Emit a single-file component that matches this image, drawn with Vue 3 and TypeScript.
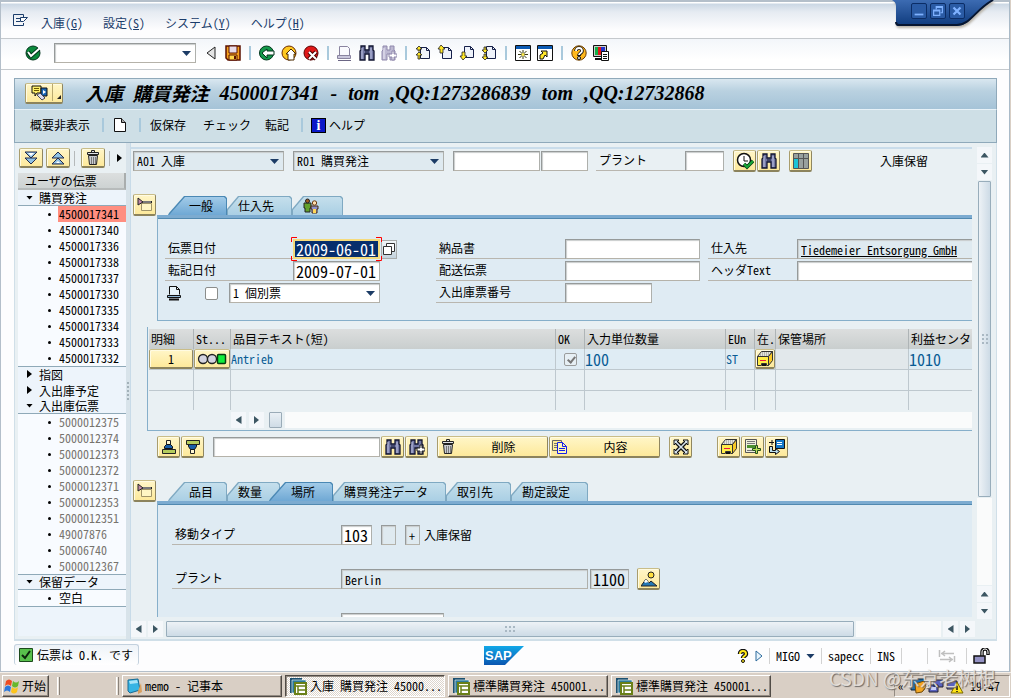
<script setup lang="ts">
import { ref } from 'vue'

interface MenuItem { label: string; key: string }
interface TreeGroup { label: string; open: boolean; muted: boolean; items: string[] }
interface Tab { label: string; icon?: string; w: string }

const menus: MenuItem[] = [
  { label: '入庫', key: 'G' },
  { label: '設定', key: 'S' },
  { label: 'システム', key: 'Y' },
  { label: 'ヘルプ', key: 'H' },
]

const toolGroups: string[][] = [
  ['save'],
  ['back', 'exit', 'cancel'],
  ['print', 'find', 'findnext-dim'],
  ['pg-first', 'pg-up', 'pg-down', 'pg-last'],
  ['newwin', 'shortcut'],
  ['help', 'layout'],
]

const titleParts: string[] = ['4500017341', '-', 'tom', ',QQ:1273286839', 'tom', ',QQ:12732868']

const tree = ref<TreeGroup[]>([
  {
    label: '購買発注', open: true, muted: false,
    items: ['4500017341', '4500017340', '4500017336', '4500017338', '4500017337', '4500017330', '4500017335', '4500017334', '4500017333', '4500017332'],
  },
  { label: '指図', open: false, muted: false, items: [] },
  { label: '入出庫予定', open: false, muted: false, items: [] },
  {
    label: '入出庫伝票', open: true, muted: true,
    items: ['5000012375', '5000012374', '5000012373', '5000012372', '5000012371', '5000012353', '5000012351', '49007876', '50006740', '5000012367'],
  },
  { label: '保留データ', open: true, muted: false, items: ['空白'] },
])
const selectedDoc = ref('4500017341')

const headTabs: Tab[] = [
  { label: '一般', w: 'w58' },
  { label: '仕入先', w: 'w66' },
  { label: '', icon: 'people', w: 'w50' },
]
const headTab = ref(0)
const itemTabs: Tab[] = [
  { label: '品目', w: 'w58' },
  { label: '数量', w: 'w54' },
  { label: '場所', w: 'w54' },
  { label: '購買発注データ', w: 'w112' },
  { label: '取引先', w: 'w66' },
  { label: '勘定設定', w: 'w76' },
]
const itemTab = ref(2)

const postingDate = ref('2009-06-01')
const docDate = ref('2009-07-01')
const tasks: string[] = ['入庫 購買発注 45000...', '標準購買発注 450001...', '標準購買発注 450001...']
</script>

<template>
  <div class="screen">
    <svg class="sprite" aria-hidden="true">
      <symbol id="menu" viewBox="0 0 16 14"><path d="M10.500 3V.5h-10v11h10V9M3 4.500h4M3 7.500h4" fill="none" stroke="#1b3d6b" /><path d="M7.500 3.500h7l-4 4h-3z" fill="#fff" stroke="#1b3d6b" /></symbol>
      <symbol id="ok" viewBox="0 0 16 16"><circle cx="8" cy="8" r="7" fill="#0a8a3c" stroke="#02351c" /><path d="M3 7l3 4 8-7" fill="none" stroke="#02351c" stroke-width="4" /><path d="M3 7l3 4 9-8" fill="none" stroke="#fff" stroke-width="2" /></symbol>
      <symbol id="save" viewBox="0 0 16 16"><path d="M1 1h14v14H3l-2-2z" fill="#f5a01c" stroke="#5a1000" stroke-width="1.500" /><path d="M4 1h8v7H4z" fill="#e8dcea" stroke="#5a1000" /><path d="M4 10h8v5H4z" fill="#ffd84a" stroke="#5a1000" /><path d="M9 11h2v3H9z" fill="#5a1000" /></symbol>
      <symbol id="back" viewBox="0 0 16 16"><circle cx="7.500" cy="8" r="7" fill="#14984a" stroke="#02351c" /><path d="M3 8l5-4v2h7v4H8v3z" fill="#fff" stroke="#02351c" /></symbol>
      <symbol id="exit" viewBox="0 0 16 16"><circle cx="8" cy="8" r="7" fill="#ffc820" stroke="#6a2a00" /><path d="M10 4l5 5h-2v6H7V9H5z" fill="#fff" stroke="#4a2a00" /></symbol>
      <symbol id="cancel" viewBox="0 0 16 16"><circle cx="8" cy="8" r="7" fill="#e01818" stroke="#5a0000" /><path d="M6 7l7 7M13 7l-7 7" stroke="#4a0000" stroke-width="4" /><path d="M6 7l7 7M13 7l-7 7" stroke="#fff" stroke-width="2" /></symbol>
      <symbol id="print" viewBox="0 0 16 16"><path d="M2.500 10V1.500h8l2 2V10" fill="#fafafe" stroke="#8a84a0" /><path d="M.5 10.500h13v3H.5z" fill="#c9c6dc" stroke="#8a84a0" /><path d="M1 15.500h13" stroke="#6b6684" /></symbol>
      <symbol id="print2" viewBox="0 0 16 16"><path d="M2.500 9.500v-8h7l3 3v5" fill="#e8f4fa" stroke="#111" /><path d="M9.500 1.500v3h3" fill="none" stroke="#111" /><path d="M.5 10.500h13v2H.5z" fill="#8fb8d8" stroke="#111" /><path d="M2 14.500h10" stroke="#111" stroke-width="2" /></symbol>
      <symbol id="find" viewBox="0 0 16 16"><path d="M1 15V6l1-1V1h4v4h4V1h4v4l1 1v9h-5V9H6v6z" fill="#7378a4" stroke="#111430" stroke-width="1.300" /><path d="M3 3v11M12 3v11" stroke="#c2c6e4" /><path d="M6 7h4" stroke="#111430" /></symbol>
      <symbol id="findnext" viewBox="0 0 16 16"><path d="M1 15V6l1-1V1h4v4h3V1h4v4l1 1v9h-5V9H6v6z" fill="#7378a4" stroke="#111430" stroke-width="1.300" /><path d="M3 3v11" stroke="#c2c6e4" /><path d="M11 6h2v3h3v3h-3v3h-2v-3H8V9h3z" fill="#fff" stroke="#222" /></symbol>
      <symbol id="findnext-dim" viewBox="0 0 16 16"><path d="M1 15V6l1-1V1h4v4h3V1h4v4l1 1v9h-5V9H6v6z" fill="#bdb9d2" stroke="#8f88ac" /><path d="M3 3v11" stroke="#eceaf6" /><path d="M11 6h2v3h3v3h-3v3h-2v-3H8V9h3z" fill="#fff" stroke="#8f88ac" /></symbol>
      <symbol id="pg-first" viewBox="0 0 16 16"><path d="M5.500 2.500h6l3 3v8h-9z" fill="#eef2fa" stroke="#16204a" /><path d="M11.500 2.500v3h3" fill="none" stroke="#16204a" /><path d="M4 1l3 3H5v2H3V4H1zM4 7l3 3H5v4H3v-4H1z" fill="#ffe628" stroke="#222" stroke-width=".8" /></symbol>
      <symbol id="pg-up" viewBox="0 0 16 16"><path d="M5.500 2.500h6l3 3v8h-9z" fill="#eef2fa" stroke="#16204a" /><path d="M11.500 2.500v3h3" fill="none" stroke="#16204a" /><path d="M4 0l4 4H6v4H3V4H1z" fill="#ffe628" stroke="#222" stroke-width=".8" /></symbol>
      <symbol id="pg-down" viewBox="0 0 16 16"><path d="M5.500 1.500h6l3 3v8h-9z" fill="#eef2fa" stroke="#16204a" /><path d="M11.500 1.500v3h3" fill="none" stroke="#16204a" /><path d="M4 15l4-4H6V7H3v4H1z" fill="#ffe628" stroke="#222" stroke-width=".8" /></symbol>
      <symbol id="pg-last" viewBox="0 0 16 16"><path d="M5.500 1.500h6l3 3v9h-9z" fill="#eef2fa" stroke="#16204a" /><path d="M11.500 1.500v3h3" fill="none" stroke="#16204a" /><path d="M4 8l3-3H5V2H3v3H1zM4 15l3-3H5V9H3v3H1z" fill="#ffe628" stroke="#222" stroke-width=".8" /></symbol>
      <symbol id="newwin" viewBox="0 0 16 16"><path d="M.5.5h15v15H.5z" fill="#fff" stroke="#111" /><path d="M1 1h14v3H1z" fill="#0a5ab4" /><path d="M8 5v9M3 9.500h10M4.500 6l7 7M11.500 6l-7 7" stroke="#3a3a10" /><circle cx="8" cy="9.500" r="1.500" fill="#ffec50" /></symbol>
      <symbol id="shortcut" viewBox="0 0 16 16"><path d="M.5.5h15v15H.5z" fill="#fff" stroke="#111" /><path d="M1 1h14v3H1z" fill="#0a5ab4" /><path d="M3 14v-4l3-2-2-2h6v6l-2-2-2 4z" fill="#ffe628" stroke="#111" /></symbol>
      <symbol id="help" viewBox="0 0 16 16"><circle cx="8" cy="8" r="7.200" fill="#ffb81c" stroke="#6a3c00" /><path d="M5 6c0-4 6-4 6 0 0 2-3 2-3 5" fill="none" stroke="#111" stroke-width="3.600" /><path d="M5 6c0-4 6-4 6 0 0 2-3 2-3 4" fill="none" stroke="#fff" stroke-width="1.800" /><circle cx="8" cy="13" r="1.500" fill="#fff" stroke="#111" /></symbol>
      <symbol id="layout" viewBox="0 0 16 16"><path d="M.5.5h13v11H.5z" fill="#ccc" stroke="#111" /><path d="M2 2h3v8H2z" fill="#12b048" /><path d="M5 2h3v8H5z" fill="#e01818" /><path d="M8 2h4v8H8z" fill="#2232cc" /><path d="M2 14h7" stroke="#111" stroke-width="2" /><path d="M8.500 6.500h7v9h-7z" fill="#fff" stroke="#111" /><path d="M10 9.500h4M10 11.500h4M10 13.500h4" stroke="#111" /></symbol>
      <symbol id="services" viewBox="0 0 18 16"><path d="M1 1h9v7H6l-2 3V8H1z" fill="#fff06a" stroke="#111" /><path d="M3 3.500h5M3 5.500h5" stroke="#6a5a00" /><path d="M10 3h6v8h-6z" fill="#1a66b4" stroke="#111" /><path d="M12 5l3 2-3 2z" fill="#fff" /><path d="M6 10l3-2 5 5-3 2z" fill="#dcdcf0" stroke="#445" /></symbol>
      <symbol id="page" viewBox="0 0 14 16"><path d="M1.500 1.500h7l4 4v9h-11z" fill="#fff" stroke="#111" /><path d="M8.500 1.500v4h4" fill="#aaa" stroke="#111" /></symbol>
      <symbol id="expand" viewBox="0 0 16 16"><path d="M2 2h12L8 8zM2 8h12l-6 6z" fill="#8fc2e6" stroke="#222a4a" /><path d="M5 3h6L8 6z" fill="#fff" /></symbol>
      <symbol id="collapse" viewBox="0 0 16 16"><path d="M2 8h12L8 2zM2 14h12L8 8z" fill="#8fc2e6" stroke="#222a4a" /><path d="M6 13h4l-2-2z" fill="#fff" /></symbol>
      <symbol id="trash" viewBox="0 0 16 16"><path d="M3.500 5.500h9l-1 9h-7z" fill="#c9ccd2" stroke="#222" /><path d="M2.500 2.500h11v2h-11zM6.500 2.500v-2h3v2" fill="#dfe2e6" stroke="#222" /><path d="M6.500 7v7M8.500 7v7M10.500 7v7" stroke="#777" /></symbol>
      <symbol id="exec" viewBox="0 0 18 18"><circle cx="8" cy="8" r="6.500" fill="#fff" stroke="#111" stroke-width="1.500" /><path d="M8 4v5h4" fill="none" stroke="#111" /><path d="M8 12l3 3 6-6" fill="none" stroke="#053c14" stroke-width="3.500" /><path d="M8 12l3 3 6-6" fill="none" stroke="#18a838" stroke-width="2" /></symbol>
      <symbol id="grid" viewBox="0 0 16 16"><path d="M.5.5h15v15H.5z" fill="#98a09e" stroke="#555" /><path d="M1 5h4v10H1zM5 1h1v4H5z" fill="#1cc4d8" /><path d="M1 5.500h14M5.500 1v14M10.500 1v14" stroke="#555" /></symbol>
      <symbol id="people" viewBox="0 0 16 16"><path d="M1 5h7v5H7v4H2v-4H1z" fill="#62a02c" stroke="#222" /><circle cx="4.500" cy="3" r="2" fill="#a05a20" stroke="#222" /><path d="M8 8h7v3h-1v4H9v-4H8z" fill="#8d90c8" stroke="#4a2a10" /><path d="M10 11h3v4h-3z" fill="#ffd858" /><circle cx="11.500" cy="5" r="2.200" fill="#ffe0b0" stroke="#6a3a10" /></symbol>
      <symbol id="detail" viewBox="0 0 16 16"><path d="M4.500 6.500h10v7h-10z" fill="#fff6c4" stroke="#a09468" /><path d="M3 5h12" stroke="#222" stroke-width="2" /><path d="M5 5h9" stroke="#fff" stroke-width=".8" /><path d="M1 1l5 4-5 3z" fill="#c08aa8" stroke="#222" /></symbol>
      <symbol id="stack-up" viewBox="0 0 16 16"><path d="M5.500 1.500h4v4h-4z" fill="#fff7d0" stroke="#222" /><path d="M3.500 9.500v-2l2-2h4l2 2v2z" fill="#1a5ea8" stroke="#111" /><path d="M1.500 10.500h13v4h-13z" fill="#b4cc5c" stroke="#222" /></symbol>
      <symbol id="stack-down" viewBox="0 0 16 16"><path d="M5.500 10.500h4v4h-4z" fill="#fff7d0" stroke="#222" /><path d="M3.500 5.500v2l2 3h4l2-3v-2z" fill="#1a5ea8" stroke="#111" /><path d="M1.500 1.500h13v4h-13z" fill="#b4cc5c" stroke="#222" /></symbol>
      <symbol id="copy" viewBox="0 0 16 16"><path d="M.5 1.500h9v10h-9z" fill="#ffee98" stroke="#666" /><path d="M2 4.500h3M2 6.500h3M2 8.500h3" stroke="#777" /><path d="M5.500 3.500h5l4 4v7h-9z" fill="#fff7b8" stroke="#1420e8" /><path d="M10.500 3.500v4h4" fill="none" stroke="#1420e8" /><path d="M7 9.500h6M7 11.500h6" stroke="#1420e8" /></symbol>
      <symbol id="spread" viewBox="0 0 16 16"><path d="M3 3l10 10M13 3L3 13" stroke="#111" stroke-width="4" /><path d="M1 6V1h5zM10 1h5v5zM15 10v5h-5zM6 15H1v-5z" fill="#d8e4ee" stroke="#111" /><path d="M3 3l10 10M13 3L3 13" stroke="#d8e4ee" stroke-width="1.500" /></symbol>
      <symbol id="stock" viewBox="0 0 16 16"><path d="M.5 5.500l4-5h11l-4 5z" fill="#e4e4dc" stroke="#333" /><path d="M3 4h9M5 2h9" stroke="#888" stroke-dasharray="1 1" /><path d="M11.500 5.500l4-5v9l-4 5z" fill="#f8c828" stroke="#333" /><path d="M.5 5.500h11v9h-2v-2h-5v2h-4z" fill="#ffec48" stroke="#333" /><path d="M5 13h4v2H5z" fill="#111" /><path d="M3 9.500h6" stroke="#e81840" /></symbol>
      <symbol id="addrow" viewBox="0 0 16 16"><path d="M.5.5h11v13H.5z" fill="#eef0dc" stroke="#555" /><path d="M2 2.500h8M2 4.500h8M2 11.500h5" stroke="#777" /><path d="M2 6h8v3H2z" fill="#4a9030" /><path d="M10.500 6.500h2v3h3v2h-3v3h-2v-3h-3v-2h3z" fill="#b8e058" stroke="#24501c" /></symbol>
      <symbol id="move" viewBox="0 0 16 16"><path d="M6.500.5h9v9h-9z" fill="#1478c8" stroke="#111" /><path d="M8 3.500h5M8 5.500h5" stroke="#fff" /><path d="M3 1v5M0 3.500h5" stroke="#111" /><path d="M.5 7.500h3v4h3v-2l4 3-4 3v-2h-6z" fill="#b8dcec" stroke="#111" /></symbol>
      <symbol id="scene" viewBox="0 0 16 16"><circle cx="10" cy="4" r="3" fill="#ffe040" stroke="#222" /><path d="M0 15l5-7 3 4 2-2 6 5z" fill="#2478b4" stroke="#222" /><path d="M3 11l2-3 3 4-2-1-1 1z" fill="#fff" /></symbol>
      <symbol id="win" viewBox="0 0 18 18"><path d="M1 1h12v4H5v11H1z" fill="#1c5070" /><path d="M3 3h14v3H6v10H3z" fill="#2c7a9a" stroke="#fff" stroke-width=".6" /><path d="M6 6h11v11H6z" fill="#fff" stroke="#6a8018" stroke-width="2" /><path d="M6 9h11M9 9v8M9 13h8" stroke="#6a8018" stroke-width="1.500" /></symbol>
      <symbol id="note" viewBox="0 0 16 16"><path d="M2 2l10-1 2 11-10 3-2-2z" fill="#36b4e4" stroke="#186a94" /><path d="M3 3l8-1 1 3-8 1z" fill="#a8e4f8" /><path d="M12 13l3-8 1 9-4 2z" fill="#d8a060" /></symbol>
      <symbol id="flag" viewBox="0 0 16 16"><path d="M2 3c2-2 4-2 6 0L7 8C5 6 3 6 1 8z" fill="#ee4c22" /><path d="M9 3c2 2 4 2 6 0l-1 5c-2 2-4 2-6 0z" fill="#68b82c" /><path d="M1 9c2-2 4-2 6 0l-1 5c-2-2-4-2-6 0z" fill="#2c78dc" /><path d="M8 9c2 2 4 2 6 0l-1 5c-2 2-4 2-6 0z" fill="#fcc41c" /></symbol>
      <symbol id="question" viewBox="0 0 12 14"><path d="M3 5c0-4 6-4 6 0 0 2-3 2-3 4" fill="none" stroke="#111" stroke-width="4.500" /><circle cx="6" cy="12" r="1.500" fill="#ffe818" stroke="#111" /><path d="M3 5c0-4 6-4 6 0 0 2-3 2-3 4" fill="none" stroke="#ffe818" stroke-width="2" /></symbol>
      <symbol id="lock" viewBox="0 0 18 16"><path d="M9 8V4c0-4 6-4 6 0v3" fill="none" stroke="#111" stroke-width="3.500" /><path d="M9 8V4c0-4 6-4 6 0v2" fill="none" stroke="#fff" /><path d="M1 8h11v7H1z" fill="#9492c4" stroke="#111" stroke-width="1.500" /></symbol>
      <symbol id="swap" viewBox="0 0 18 14"><path d="M1.500 1v7M3 4.500h13M7 2L4 4.500 7 7M16.500 7v6M2 10.500h13M11 8l3 2.500-3 2.500" fill="none" stroke="#bfbfbf" stroke-width="1.500" /></symbol>
    </svg>

    <main class="sapwin">
      <div class="winctl">
        <svg class="wc-bg" viewBox="0 0 108 28" aria-hidden="true">
          <defs><linearGradient id="wc" x1="0" y1="0" x2="0" y2="1"><stop offset="0" stop-color="#3c6bb2" /><stop offset="1" stop-color="#0e3a7c" /></linearGradient></defs>
          <path d="M0 0q4 2 4 6v18q0 2 3 2h58c13 0 18-16 37-26z" fill="url(#wc)" />
          <path d="M4 22q0 3 3 3h58c13 0 18-15 36-25" fill="none" stroke="#071631" stroke-width="2" />
        </svg>
        <div class="wc-btns">
          <button type="button" aria-label="最小化"><svg viewBox="0 0 16 16"><path d="M3 12h10" stroke="#7fb2ff" stroke-width="2" /></svg></button>
          <button type="button" aria-label="元に戻す"><svg viewBox="0 0 16 16"><path d="M3 7h7v6H3zM6 6V3h7v7h-2M3 8h7M6 4h7" fill="none" stroke="#7fb2ff" stroke-width="1.400" /></svg></button>
          <button type="button" aria-label="閉じる"><svg viewBox="0 0 16 16"><path d="M4 4l8 8M12 4l-8 8" stroke="#7fb2ff" stroke-width="2.600" /></svg></button>
        </div>
      </div>

      <nav class="menubar">
        <button type="button" class="plain menuicon" aria-label="メニュー"><svg class="m"><use href="#menu" /></svg></button>
        <button v-for="m in menus" :key="m.key" type="button" class="plain">{{ m.label }}(<u>{{ m.key }}</u>)</button>
      </nav>

      <div class="stdbar">
        <button type="button" class="plain okbtn" aria-label="Enter"><svg class="ic"><use href="#ok" /></svg></button>
        <span class="combo cmd"><input type="text" class="field" aria-label="コマンド"></span>
        <button type="button" class="plain tri" aria-label="戻る"><svg viewBox="0 0 10 16"><path d="M9 2v12L1 8z" fill="#e4e4e4" stroke="#222" /></svg></button>
        <template v-for="(g, gi) in toolGroups" :key="gi">
          <i v-if="gi" class="sep" />
          <button v-for="n in g" :key="n" type="button" class="plain" :aria-label="n"><svg class="ic"><use :href="'#' + n" /></svg></button>
        </template>
      </div>

      <section class="frame">
        <header class="titlebar">
          <button type="button" class="yb service" aria-label="サービス"><svg><use href="#services" /></svg><i /><b /></button>
          <h1><span>入庫 購買発注</span><span v-for="(p, i) in titleParts" :key="i" class="lat">{{ p }}</span></h1>
        </header>
        <div class="appbar">
          <button type="button" class="plain">概要非表示</button><i class="sep" />
          <button type="button" class="plain" aria-label="新規"><svg class="pg"><use href="#page" /></svg></button><i class="sep" />
          <button type="button" class="plain">仮保存</button>
          <button type="button" class="plain check">チェック</button>
          <button type="button" class="plain">転記</button><i class="sep" />
          <button type="button" class="plain info"><b>i</b>ヘルプ</button>
        </div>

        <div class="body">
          <aside class="side">
            <div class="sidebar">
              <button type="button" class="yb" aria-label="展開"><svg class="ic"><use href="#expand" /></svg></button>
              <button type="button" class="yb" aria-label="縮小"><svg class="ic"><use href="#collapse" /></svg></button>
              <i class="gsep" />
              <button type="button" class="yb" aria-label="削除"><svg class="ic"><use href="#trash" /></svg></button>
              <i class="gsep" />
              <span class="arr right" />
            </div>
            <h2>ユーザの伝票</h2>
            <ul class="tree">
              <li v-for="g in tree" :key="g.label" :class="{ lined: g.open }">
                <button type="button" class="plain node" @click="g.open = !g.open"><span class="arr" :class="g.open ? 'down' : 'right'" />{{ g.label }}</button>
                <ul v-if="g.open" class="leaves">
                  <li v-for="d in g.items" :key="d">
                    <button type="button" class="plain leaf" :class="{ muted: g.muted, sel: d === selectedDoc }" @click="selectedDoc = d"><i /><span>{{ d }}</span></button>
                  </li>
                </ul>
              </li>
            </ul>
          </aside>
          <div class="splitter"><i v-for="n in 5" :key="n" /></div>

          <div class="work">
            <div class="upper">
              <div class="content">
                <div class="selrow">
                  <span class="combo"><select class="field ro w151" aria-label="処理"><option>A01 入庫</option></select></span>
                  <span class="combo"><select class="field ro w151" aria-label="参照伝票"><option>R01 購買発注</option></select></span>
                  <span class="pair"><input type="text" class="field w87" aria-label="伝票番号"><input type="text" class="field w47" aria-label="明細番号"></span>
                  <span class="pair nogap"><label for="plant0" class="lab w89">プラント</label><input id="plant0" type="text" class="field w39"></span>
                  <span class="pair">
                    <button type="button" class="yb sq" aria-label="実行"><svg class="big"><use href="#exec" /></svg></button>
                    <button type="button" class="yb sq" aria-label="検索"><svg class="ic"><use href="#find" /></svg></button>
                  </span>
                  <button type="button" class="yb sq" aria-label="レイアウト"><svg class="ic"><use href="#grid" /></svg></button>
                  <span class="mvt">入庫保留</span>
                </div>

                <section class="block first">
                  <button type="button" class="yb sq" aria-label="ヘッダ"><svg class="ic"><use href="#detail" /></svg></button>
                  <div class="tabbed">
                    <div class="tabs" role="tablist">
                      <button v-for="(t, i) in headTabs" :key="i" type="button" role="tab" class="tab" :class="[t.w, { on: headTab === i }]" @click="headTab = i"><svg v-if="t.icon" class="ic"><use :href="'#' + t.icon" /></svg><span>{{ t.label }}</span></button>
                    </div>
                    <div class="panel head">
                      <label for="d1" class="lab">伝票日付</label>
                      <div class="cell"><span class="focus"><input id="d1" v-model="postingDate" type="text" class="field w87 big16"><svg viewBox="0 0 91 24" aria-hidden="true"><path d="M.5 5V.5H6M85 .5h5.500V5M90.500 19v4.500H85M6 23.500H.5V19" fill="none" stroke="#f00" /></svg></span><button type="button" class="f4" aria-label="入力候補"><svg viewBox="0 0 14 14"><path d="M4.500 4.500v-3h8v8h-3" fill="#fff" stroke="#333" /><path d="M1.500 4.500h8v8h-8z" fill="#fff" stroke="#333" /></svg></button></div>
                      <label for="n1" class="lab">納品書</label>
                      <div class="cell"><input id="n1" type="text" class="field w135"></div>
                      <label for="v1" class="lab">仕入先</label>
                      <input id="v1" type="text" class="field ro under" readonly value="Tiedemeier Entsorgung GmbH">

                      <label for="d2" class="lab">転記日付</label>
                      <div class="cell"><input id="d2" v-model="docDate" type="text" class="field w87 big16"></div>
                      <label for="n2" class="lab">配送伝票</label>
                      <div class="cell"><input id="n2" type="text" class="field w135"></div>
                      <label for="v2" class="lab">ヘッダText</label>
                      <input id="v2" type="text" class="field">

                      <div class="slip"><svg class="ic"><use href="#print2" /></svg><input type="checkbox" class="cb" aria-label="印刷"><span class="combo"><select class="field w151" aria-label="票種別"><option>1 個別票</option></select></span></div>
                      <label for="n3" class="lab">入出庫票番号</label>
                      <div class="cell"><input id="n3" type="text" class="field w87"></div>
                    </div>
                  </div>
                </section>

                <div class="gridbox">
                  <table>
                    <colgroup><col class="c1"><col class="c2"><col class="c3"><col class="c4"><col class="c5"><col class="c6"><col class="c7"><col class="c8"><col></colgroup>
                    <thead><tr><th>明細</th><th>St...</th><th>品目テキスト（短）</th><th>OK</th><th>入力単位数量</th><th>EUn</th><th>在.</th><th>保管場所</th><th>利益センタ</th></tr></thead>
                    <tbody>
                      <tr class="data">
                        <td><button type="button" class="yb fill">1</button></td>
                        <td><button type="button" class="yb fill" aria-label="状態"><svg class="lights" viewBox="0 0 30 12"><circle cx="6" cy="6" r="4.500" fill="#d4d4e0" stroke="#222" stroke-width="1.300" /><circle cx="15" cy="6" r="4.500" fill="#d4d4e0" stroke="#222" stroke-width="1.300" /><rect x="20.500" y="1.500" width="8" height="9" rx="1" fill="#10ee3c" stroke="#063c10" stroke-width="1.500" /></svg></button></td>
                        <td>Antrieb</td>
                        <td class="mid"><input type="checkbox" class="cb dim" checked disabled aria-label="OK"></td>
                        <td class="big16">100</td><td>ST</td>
                        <td><button type="button" class="yb fill" aria-label="在庫"><svg class="ic"><use href="#stock" /></svg></button></td>
                        <td class="ro" /><td class="big16">1010</td>
                      </tr>
                      <tr v-for="r in 2" :key="r"><td v-for="c in 9" :key="c" /></tr>
                    </tbody>
                  </table>
                  <div class="gscroll"><span class="sb"><b class="arr left" /></span><span class="sb"><b class="arr right" /></span><span class="thumb" /><span class="track" /></div>
                </div>

                <div class="gtools">
                  <span class="pair">
                    <button type="button" class="yb sq" aria-label="前へ"><svg class="ic"><use href="#stack-up" /></svg></button>
                    <button type="button" class="yb sq" aria-label="次へ"><svg class="ic"><use href="#stack-down" /></svg></button>
                  </span>
                  <span class="pair">
                    <input type="text" class="field w167" aria-label="検索語">
                    <button type="button" class="yb sq" aria-label="検索"><svg class="ic"><use href="#find" /></svg></button>
                    <button type="button" class="yb sq" aria-label="次を検索"><svg class="ic"><use href="#findnext" /></svg></button>
                  </span>
                  <span class="pair">
                    <button type="button" class="yb wide"><svg class="ic"><use href="#trash" /></svg><span>削除</span></button>
                    <button type="button" class="yb wide"><svg class="ic"><use href="#copy" /></svg><span>内容</span></button>
                  </span>
                  <button type="button" class="yb sq" aria-label="分配"><svg class="ic"><use href="#spread" /></svg></button>
                  <span class="pair last">
                    <button type="button" class="yb sq" aria-label="在庫"><svg class="ic"><use href="#stock" /></svg></button>
                    <button type="button" class="yb sq" aria-label="行追加"><svg class="ic"><use href="#addrow" /></svg></button>
                    <button type="button" class="yb sq" aria-label="移動"><svg class="ic"><use href="#move" /></svg></button>
                  </span>
                </div>

                <section class="block second">
                  <button type="button" class="yb sq" aria-label="明細詳細"><svg class="ic"><use href="#detail" /></svg></button>
                  <div class="tabbed">
                    <div class="tabs" role="tablist">
                      <button v-for="(t, i) in itemTabs" :key="i" type="button" role="tab" class="tab" :class="[t.w, { on: itemTab === i }]" @click="itemTab = i"><span>{{ t.label }}</span></button>
                    </div>
                    <div class="panel item">
                      <div class="irow"><label for="mt" class="lab w169">移動タイプ</label><input id="mt" type="text" class="field big16 w31" value="103"><input type="text" class="field ro w15" readonly aria-label="特殊在庫"><input type="text" class="field ro w15" readonly value="+" aria-label="符号"><span class="txt">入庫保留</span></div>
                      <div class="irow plant"><label for="pl" class="lab w169">プラント</label><input id="pl" type="text" class="field ro w247" readonly value="Berlin"><input type="text" class="field ro big16 w39" readonly value="1100" aria-label="プラントコード"><button type="button" class="yb sq" aria-label="住所"><svg class="ic"><use href="#scene" /></svg></button></div>
                      <div class="irow"><span class="w169" /><input type="text" class="field w103" aria-label="保管場所"></div>
                    </div>
                  </div>
                </section>
              </div>
              <div class="vscroll"><span class="sb"><b class="arr up" /></span><span class="sb"><b class="arr down" /></span><span class="vthumb"><i v-for="n in 6" :key="n" /></span><span class="track" /><span class="sb"><b class="arr up" /></span><span class="sb"><b class="arr down" /></span></div>
            </div>
            <div class="hscroll"><span class="sb"><b class="arr left" /></span><span class="sb"><b class="arr right" /></span><span class="hthumb"><i v-for="n in 6" :key="n" /></span><span class="track" /><span class="sb"><b class="arr left" /></span><span class="sb"><b class="arr right" /></span></div>
          </div>
        </div>
      </section>

      <footer class="status">
        <div class="msg"><svg viewBox="0 0 14 14"><path d="M.5.5h13v13H.5z" fill="#58c04c" stroke="#1c4a1c" /><path d="M3 7l3 3 5-7" fill="none" stroke="#0c240c" stroke-width="2" /></svg>伝票は O.K. です</div>
        <svg class="sap" viewBox="0 0 40 20" role="img" aria-label="SAP"><defs><linearGradient id="sapg" x1="0" y1="0" x2="0" y2="1"><stop offset="0" stop-color="#12a8e8" /><stop offset="1" stop-color="#0a56b0" /></linearGradient></defs><path d="M0 0h40L21 19H0z" fill="url(#sapg)" /><text x="1" y="14" font-family="Liberation Sans" font-weight="700" font-size="13" fill="#fff">SAP</text></svg>
        <div class="sys">
          <svg class="q"><use href="#question" /></svg>
          <svg class="pl" viewBox="0 0 8 12"><path d="M1 1l6 5-6 5z" fill="#e8f4fc" stroke="#2c6a9c" /></svg>
          <i class="gsep" /><span>MIGO</span><b class="arr down blue" /><i class="gsep" /><span>sapecc</span><i class="gsep" /><span>INS</span><i class="gsep" /><span class="blank" /><i class="gsep" />
          <svg class="swap"><use href="#swap" /></svg><i class="gsep" /><svg class="lk"><use href="#lock" /></svg>
        </div>
      </footer>
    </main>

    <footer class="taskbar">
      <button type="button" class="tb start"><svg class="ic"><use href="#flag" /></svg>开始</button>
      <i class="ridge" /><i class="ridge two" />
      <button type="button" class="tb cn"><svg class="ic"><use href="#note" /></svg>memo - 记事本</button>
      <button v-for="(t, i) in tasks" :key="i" type="button" class="tb" :class="{ down: i === 0 }"><svg class="big"><use href="#win" /></svg>{{ t }}</button>
      <div class="tray">
        <span>«</span>
        <svg viewBox="0 0 54 16"><path d="M1 1h13v11H1z" fill="#1c70b0" stroke="#123" /><path d="M5 6l9-3 2 6-4 5-6 1z" fill="#f4a824" stroke="#734a08" /><path d="M24 2h9v7h-9zM19 7h9v7h-9z" fill="#5a62c0" stroke="#223" /><path d="M21 9h5v3h-5z" fill="#c8d0f8" /><path d="M37 3h10v8H37z" fill="#5a62c0" stroke="#223" /><path d="M47 4l6 11H41z" fill="#ffe418" stroke="#7a6800" /><path d="M47 8v4M47 13v1" stroke="#111" stroke-width="1.500" /></svg>
        <time>19:47</time>
      </div>
      <div class="mark">CSDN @东京老树根</div>
    </footer>
  </div>
</template>

<style>
html, body { margin: 0; background: #d9cfc5; }
</style>

<style scoped>
* { box-sizing: border-box; }
.screen { display: flex; flex-direction: column; height: 100vh; min-height: 600px; font-family: "Noto Sans CJK JP", "Noto Sans CJK SC", sans-serif; font-size: 12px; line-height: 16px; font-feature-settings: "hwid"; color: #000; overflow: hidden; }
button, input, select { font: inherit; font-feature-settings: "hwid"; color: inherit; margin: 0; padding: 0; border-radius: 0; }
ul { list-style: none; margin: 0; padding: 0; }
i, b { flex: none; }
.sprite { position: absolute; width: 0; height: 0; }
.ic { width: 16px; height: 16px; flex: none; display: block; }
.big { width: 18px; height: 18px; flex: none; display: block; }
.plain { border: 0; background: none; display: block; white-space: nowrap; }

.sapwin { flex: 1; min-height: 0; display: flex; flex-direction: column; position: relative; background: #fdfdfe; border: 1px solid #b4bfca; border-top-width: 2px; border-right-color: #a9bac8; margin-right: 1px; }
.winctl { position: absolute; top: -2px; right: 9px; width: 108px; height: 28px; }
.wc-bg { width: 108px; height: 28px; display: block; filter: drop-shadow(1px 2px 1px #b9b3a8); }
.wc-btns { position: absolute; left: 19px; top: 3px; display: flex; gap: 3px; }
.wc-btns button { width: 16px; height: 16px; border: 1px solid #0b2d66; background: #2a5ba5; display: block; border-radius: 2px; }
.wc-btns svg { display: block; width: 14px; height: 14px; }

.menubar { flex: none; height: 36px; display: flex; align-items: center; gap: 20px; padding: 5px 0 0 12px; background: linear-gradient(#fff 0 1px, #cbd7e4 2px, #e6ebf2 10px, #fdfdfe 28px); color: #1b3d6b; }
.menuicon { margin: -4px -8px 0 0; }
.m { width: 16px; height: 14px; display: block; }
.stdbar { flex: none; height: 32px; display: flex; align-items: center; gap: 6px; border-top: 1px solid #c5c9cd; border-bottom: 1px solid #c5c9cd; background: linear-gradient(#f3f6fa, #fff 70%); padding-left: 24px; padding-bottom: 2px; }
.okbtn { margin-right: 7px; }
.cmd { width: 142px; }
.tri { margin: 0 3px 0 4px; }
.tri svg { display: block; width: 10px; height: 16px; }
.sep { width: 2px; height: 14px; margin: 0 2px; background: #a9c9dc; }

.frame { flex: 1; min-height: 0; display: flex; flex-direction: column; margin: 8px 12px 0 13px; }
.titlebar { flex: none; height: 31px; display: flex; align-items: center; gap: 22px; border: 1px solid #8fa9ba; border-bottom: 0; background: linear-gradient(#d9e7f0, #b9d1e0 40%, #a5c3d7); padding: 0 0 2px 10px; }
.service { width: 38px; height: 21px; display: flex; align-items: center; padding-left: 3px; }
.service svg { width: 18px; height: 16px; }
.service i { width: 1px; height: 17px; background: #b9a970; margin-left: 3px; }
.service b { border: 2px solid transparent; border-right-color: #222; border-bottom-color: #222; margin: 9px 0 0 4px; }
h1 { margin: 0; font-size: 19px; line-height: 26px; font-weight: 700; font-style: italic; display: flex; gap: 11px; white-space: pre; }
.lat { font-family: "Liberation Serif", serif; font-size: 20px; font-feature-settings: normal; }
.appbar { flex: none; height: 34px; display: flex; align-items: center; border: 1px solid #8fa9ba; border-top: 1px solid #e8f2f8; background: #cedfe6; padding: 0 0 2px 15px; gap: 10px; }
.appbar .sep { width: 2px; }
.check { margin-left: 7px; }
.check + .plain { margin-left: 4px; }
.appbar .sep + .plain:not(.info) { margin-left: -3px; }
.pg { width: 14px; height: 16px; display: block; }
.appbar .info { display: flex; align-items: center; gap: 3px; margin-left: -4px; }
.info b { width: 15px; height: 15px; background: #0a18c8; border: 1px solid #000; color: #fff; font: 700 14px/13px "Liberation Serif", serif; text-align: center; }

.body { flex: 1; min-height: 0; display: flex; background: #e9f0f3; border: 1px solid #d0dfe8; border-top: 0; border-bottom-width: 2px; }
.side { flex: none; width: 111px; padding: 0 0 3px 3px; display: flex; flex-direction: column; }
.sidebar { display: flex; align-items: center; gap: 3px; height: 30px; padding-left: 1px; }
.sidebar .yb { width: 24px; height: 20px; }
.gsep { width: 1px; height: 15px; background: #b5b9ba; margin: 0 3px 0 1px; }
h2 { margin: 0; height: 17px; font-size: 12px; line-height: 15px; font-weight: 400; padding-left: 7px; background: linear-gradient(#dcdfdf, #cdd2d2); border-right: 2px solid #a9adad; border-bottom: 2px solid #b7bbbb; }
.tree { flex: 1; background: #edf4fb; min-height: 0; overflow: hidden; }
.node { display: flex; align-items: center; width: 100%; height: 16px; line-height: 15px; padding-left: 8px; }
.node .arr { margin-right: 6px; }
.lined > .node { border-bottom: 1px solid #8fa9b8; }
.leaves { background: #f8fbff; border-bottom: 1px solid #8fa9b8; margin-bottom: -1px; }
.leaf { display: flex; align-items: center; width: 100%; height: 16px; padding-left: 30px; }
.leaf i { width: 3px; height: 3px; border-radius: 50%; background: #000; margin-right: 7px; }
.leaf span { flex: 1; text-align: left; padding-left: 1px; line-height: 16px; }
.sel span { background: #ff8e80; }
.muted { color: #77736e; }

.arr { display: inline-block; width: 7px; height: 8px; flex: none; background: #000; clip-path: polygon(1px 0, 6px 50%, 1px 100%); }
.arr.down { width: 7px; height: 4px; clip-path: polygon(0 0, 100% 0, 50% 100%); }
.arr.up { width: 8px; height: 5px; clip-path: polygon(50% 0, 100% 100%, 0 100%); }
.arr.left { width: 6px; clip-path: polygon(100% 0, 100% 100%, 0 50%); }
.sb .arr { background: #3c5662; }
.sb .arr.down { width: 8px; height: 5px; }

.splitter { flex: none; width: 5px; background: #d8e3ea; display: flex; flex-direction: column; justify-content: center; align-items: center; gap: 2px; border-right: 1px solid #c8dbe8; }
.splitter i { width: 2px; height: 2px; background: #a3b1b9; }

.work { flex: 1; min-width: 0; display: flex; flex-direction: column; padding: 4px 4px 2px 0; gap: 2px; }
.upper { flex: 1; min-height: 0; display: flex; }
.content { flex: 1; min-width: 0; overflow: hidden; display: flex; flex-direction: column; border-top: 2px solid #c9dcea; padding-left: 2px; margin: 0 5px 2px 0; }
.field { height: 20px; min-width: 0; border: 1px solid #969a9a; border-right-color: #aeb0ac; border-bottom-color: #b5b2a9; background: #fff; box-shadow: inset 1px 1px 1px #c9cccc; padding: 0 3px; line-height: 16px; outline: 0; appearance: none; display: block; flex: none; }
.ro { background: #dfeaf0; }
.combo { position: relative; display: block; flex: none; }
.combo .field { width: 100%; }
.combo .field.w151 { width: 151px; }
.combo::after { content: ""; position: absolute; right: 5px; top: 8px; width: 9px; height: 5px; background: #1c3c66; clip-path: polygon(0 0, 100% 0, 50% 100%); pointer-events: none; }
.w15 { width: 15px; } .w31 { width: 31px; } .w39 { width: 39px; } .w47 { width: 47px; } .w87 { width: 87px; }
.w89 { width: 89px; } .w103 { width: 103px; } .w135 { width: 135px; } .w151 { width: 151px; } .w167 { width: 167px; }
.w169 { width: 169px; flex: none; } .w247 { width: 247px; }
.big16 { font-size: 16px; }
input.big16 { padding: 0 2px; line-height: 18px; }
.lab { height: 20px; line-height: 18px; border-bottom: 1px solid #b9b6af; padding-left: 3px; display: block; flex: none; white-space: nowrap; }
.yb { display: flex; align-items: center; justify-content: center; flex: none; border: 1px solid #8f8660; border-top-color: #c9bd88; border-left-color: #a99d6c; border-bottom: 2px solid #8c835c; border-radius: 2px; background: linear-gradient(#fff6c8, #fde99b); box-shadow: inset 1px 1px #fffbe2; overflow: hidden; }
.sq { width: 23px; height: 22px; }
.selrow { flex: none; display: flex; align-items: center; gap: 9px; margin-top: 1px; height: 22px; }
.selrow .nogap { gap: 0; margin-left: -1px; }
.pair { display: flex; align-items: center; gap: 1px; flex: none; }
.mvt { margin-left: 59px; white-space: nowrap; }

.block { display: flex; gap: 1px; }
.first { flex: none; margin-top: 22px; }
.second { flex: 1; min-height: 0; margin-top: 22px; }
.tabbed { flex: 1; min-width: 0; display: flex; flex-direction: column; padding-top: 2px; }
.tabs { display: flex; height: 19px; padding-left: 12px; gap: 1px; flex: none; }
.tab { position: relative; z-index: 0; border: 0; background: none; height: 19px; padding-left: 10px; display: flex; align-items: center; flex: none; white-space: nowrap; }
.tab:first-child { padding-left: 20px; }
.tab::before, .tab::after { content: ""; position: absolute; z-index: -1; inset: 0 0 0 -1px; background: #7fa9c2; clip-path: polygon(11px 0, calc(100% - 2px) 0, 100% 2px, 100% 100%, 0 100%, 0 13px); }
.tab::after { inset: 1px 1px 0 0; background: linear-gradient(#c5dfec, #aacfe4); }
.tab.on { z-index: 1; }
.tab.on::before { background: #4a88b4; left: -12px; }
.tab.on::after { background: linear-gradient(#a2cbe8, #6fa8d4); left: -11px; }
.tab.on::before, .tab.on::after, .tab:first-child::before, .tab:first-child::after { clip-path: polygon(16px 0, calc(100% - 2px) 0, 100% 2px, 100% 100%, 0 100%, 1px 17px); }
.tab:first-child::before { left: -1px; }
.tab:first-child::after { left: 0; }
.w50 { width: 50px; } .w54 { width: 52px; } .w58 { width: 58px; } .w66 { width: 64px; } .w76 { width: 76px; } .w112 { width: 112px; }
.panel { border-top: 3px solid #7cabd0; box-shadow: inset 0 1px #5189b0; border-left: 1px solid #86afca; background: #dfebf3; }
.head { display: grid; grid-template-columns: 128px 143px 129px 143px 89px 1fr; grid-auto-rows: 20px; row-gap: 2px; padding: 21px 0 17px 7px; border-bottom: 1px solid #86afca; }
.head > .field { width: auto; border-right: 0; }
.under { text-decoration: underline; }
.cell { display: flex; align-items: center; gap: 1px; }
.focus { position: relative; }
.focus .field { background: #062e6c; color: #fff; border: 2px solid #f5db7c; box-shadow: none; padding: 0 1px; line-height: 16px; }
.focus svg { position: absolute; left: -2px; top: -2px; width: 91px; height: 24px; pointer-events: none; }
.f4 { width: 16px; height: 19px; border: 1px solid #a9acab; background: linear-gradient(#f2f6f8, #c3d2dc); display: flex; align-items: center; justify-content: center; }
.f4 svg { width: 14px; height: 14px; flex: none; }
.slip { grid-column: span 2; display: flex; align-items: center; padding-left: 2px; }
.slip .cb { margin: 0 11px 0 22px; }
.cb { appearance: none; width: 13px; height: 13px; border: 1px solid #8b8d8b; border-radius: 2px; background: #fff; position: relative; display: inline-block; flex: none; }
.dim { background: #e6eff4; border-color: #9a9c9c; }
.dim::after { content: ""; position: absolute; left: 4px; top: 1px; width: 3px; height: 6px; border: solid #777; border-width: 0 2px 2px 0; transform: rotate(40deg); }

.gridbox { flex: none; margin: 6px 0 0 14px; border-left: 1px solid #86afca; border-bottom: 1px solid #86afca; padding: 2px 0 2px 1px; }
table { width: 100%; table-layout: fixed; border-collapse: separate; border-spacing: 0; }
.c1 { width: 45px; } .c2 { width: 37px; } .c3 { width: 325px; } .c4 { width: 29px; } .c5 { width: 141px; } .c6 { width: 29px; } .c7 { width: 21px; } .c8 { width: 133px; }
th { font-weight: 400; text-align: left; height: 20px; padding: 0 0 0 2px; background: linear-gradient(#dcdede, #c9cece); border-right: 1px solid #aeb4b6; white-space: nowrap; line-height: 16px; }
td { height: 21px; padding: 0; border-right: 1px solid #bec8ce; border-bottom: 1px solid #bec8ce; line-height: 20px; white-space: nowrap; }
th:last-child, td:last-child { border-right: 0; }
tr:last-child td { border-bottom: 0; height: 19px; }
.data td { background: #dfecf4; color: #0a5c94; }
.data td.ro { background: #e2e8eb; }
.mid { text-align: center; line-height: 0; }
.mid .cb { vertical-align: middle; }
.fill { width: 100%; height: 20px; color: #000; line-height: 16px; }
.lights { width: 30px; height: 12px; flex: none; }
.gscroll { display: flex; gap: 3px; height: 16px; margin: 2px 0 0 82px; }
.sb { width: 15px; height: 16px; background: #f4f7fa; display: flex; align-items: center; justify-content: center; flex: none; }
.track { flex: 1; background: #fafbfb; }
.thumb { width: 13px; border: 1px solid #9aabb7; background: linear-gradient(#eaf0f5, #cfdce6); border-radius: 1px; margin-left: 2px; }
.gtools { flex: none; display: flex; gap: 9px; margin: 5px 0 0 24px; align-items: center; }
.gtools .last { margin-left: 16px; }
.wide { width: 111px; height: 22px; justify-content: flex-start; padding-left: 2px; }
.wide span { flex: 1; text-align: center; padding-left: 4px; }
.second .panel { flex: 1; min-height: 0; overflow: hidden; border-bottom: 0; }
.item { padding: 21px 0 0 14px; display: flex; flex-direction: column; gap: 24px; }
.irow { display: flex; align-items: center; height: 20px; flex: none; }
.irow .w15 { margin-left: 9px; }
.irow .txt { margin-left: 4px; }
.irow .w39 { margin-left: 2px; }
.irow .sq { margin-left: 8px; }

.vscroll { flex: none; width: 15px; display: flex; flex-direction: column; gap: 1px; }
.vthumb { flex: 317 1 0; margin: 0 1px; border: 1px solid #98adbb; border-radius: 1px; background: linear-gradient(90deg, #edf2f6, #cddbe6); display: grid; grid-template-columns: 2px 2px; gap: 2px; place-content: center; }
.vthumb i, .hthumb i { width: 2px; height: 2px; background: #a9b8c3; }
.vscroll .track { flex: 88 1 0; }
.hscroll { flex: none; height: 16px; display: flex; gap: 2px; padding-right: 17px; }
.hthumb { flex: 689 1 0; margin-left: 1px; border: 1px solid #98adbb; border-radius: 1px; background: linear-gradient(#edf2f6, #cddbe6); display: grid; grid-template-columns: repeat(3, 2px); gap: 2px; place-content: center; }
.hscroll .track { flex: 85 1 0; }

.status { flex: none; height: 30px; display: flex; align-items: flex-start; padding: 3px 18px 0 13px; }
.msg { width: 125px; height: 21px; display: flex; align-items: center; gap: 4px; padding-left: 4px; border: 1px solid #c3d1de; border-bottom: 0; border-radius: 3px; background: linear-gradient(#eef3f8, #fff); white-space: pre; flex: none; }
.msg svg { width: 14px; height: 14px; }
.sap { width: 40px; height: 20px; margin: 2px auto 0 345px; flex: none; }
.sys { display: flex; align-items: center; gap: 6px; height: 24px; color: #000; }
.sys .gsep { margin: 0; height: 16px; background: #d2d2d2; }
.q { width: 12px; height: 14px; } .pl { width: 8px; height: 12px; } .lk { width: 18px; height: 16px; } .swap { width: 18px; height: 14px; margin: 0 4px; }
.blank { width: 13px; }
.arr.blue { background: #1c3c66; width: 9px; height: 5px; }

.taskbar { flex: none; height: 26px; display: flex; align-items: center; gap: 3px; background: #d9cfc5; border-top: 1px solid #f4efe9; padding: 1px 1px 1px 2px; position: relative; }
.tb { height: 22px; width: 160px; display: flex; align-items: center; gap: 3px; background: #d9cfc5; border: 1px solid; border-color: #fff #504b46 #504b46 #fff; box-shadow: inset -1px -1px #948b82; padding: 0 3px; white-space: pre; overflow: hidden; flex: none; }
.tb.down { background: repeating-conic-gradient(#fff 0 25%, #ddd5cc 0 50%) 0 0 / 2px 2px; border-color: #504b46 #fff #fff #504b46; box-shadow: inset 1px 1px #948b82; }
.start, .cn { font-family: "Noto Sans CJK SC", sans-serif; }
.start { width: 47px; padding: 0 1px; gap: 2px; }
.ridge { width: 3px; height: 18px; margin-left: 5px; background: #e9e2da; border-right: 1px solid #8a827a; border-left: 1px solid #fff; }
.ridge.two { margin: 0 0 0 53px; }
.tray { margin-left: auto; width: 116px; height: 22px; display: flex; align-items: center; justify-content: space-between; border: 1px solid; border-color: #948b82 #fff #fff #948b82; padding: 0 9px 0 3px; }
.tray svg { width: 54px; height: 16px; flex: none; }
.mark { position: absolute; right: 15px; bottom: 8px; font: 19px/24px "Noto Sans CJK SC", sans-serif; font-feature-settings: normal; color: rgba(236, 232, 228, .85); text-shadow: 1px 1px 1px #6f6a66; white-space: nowrap; pointer-events: none; }
</style>
